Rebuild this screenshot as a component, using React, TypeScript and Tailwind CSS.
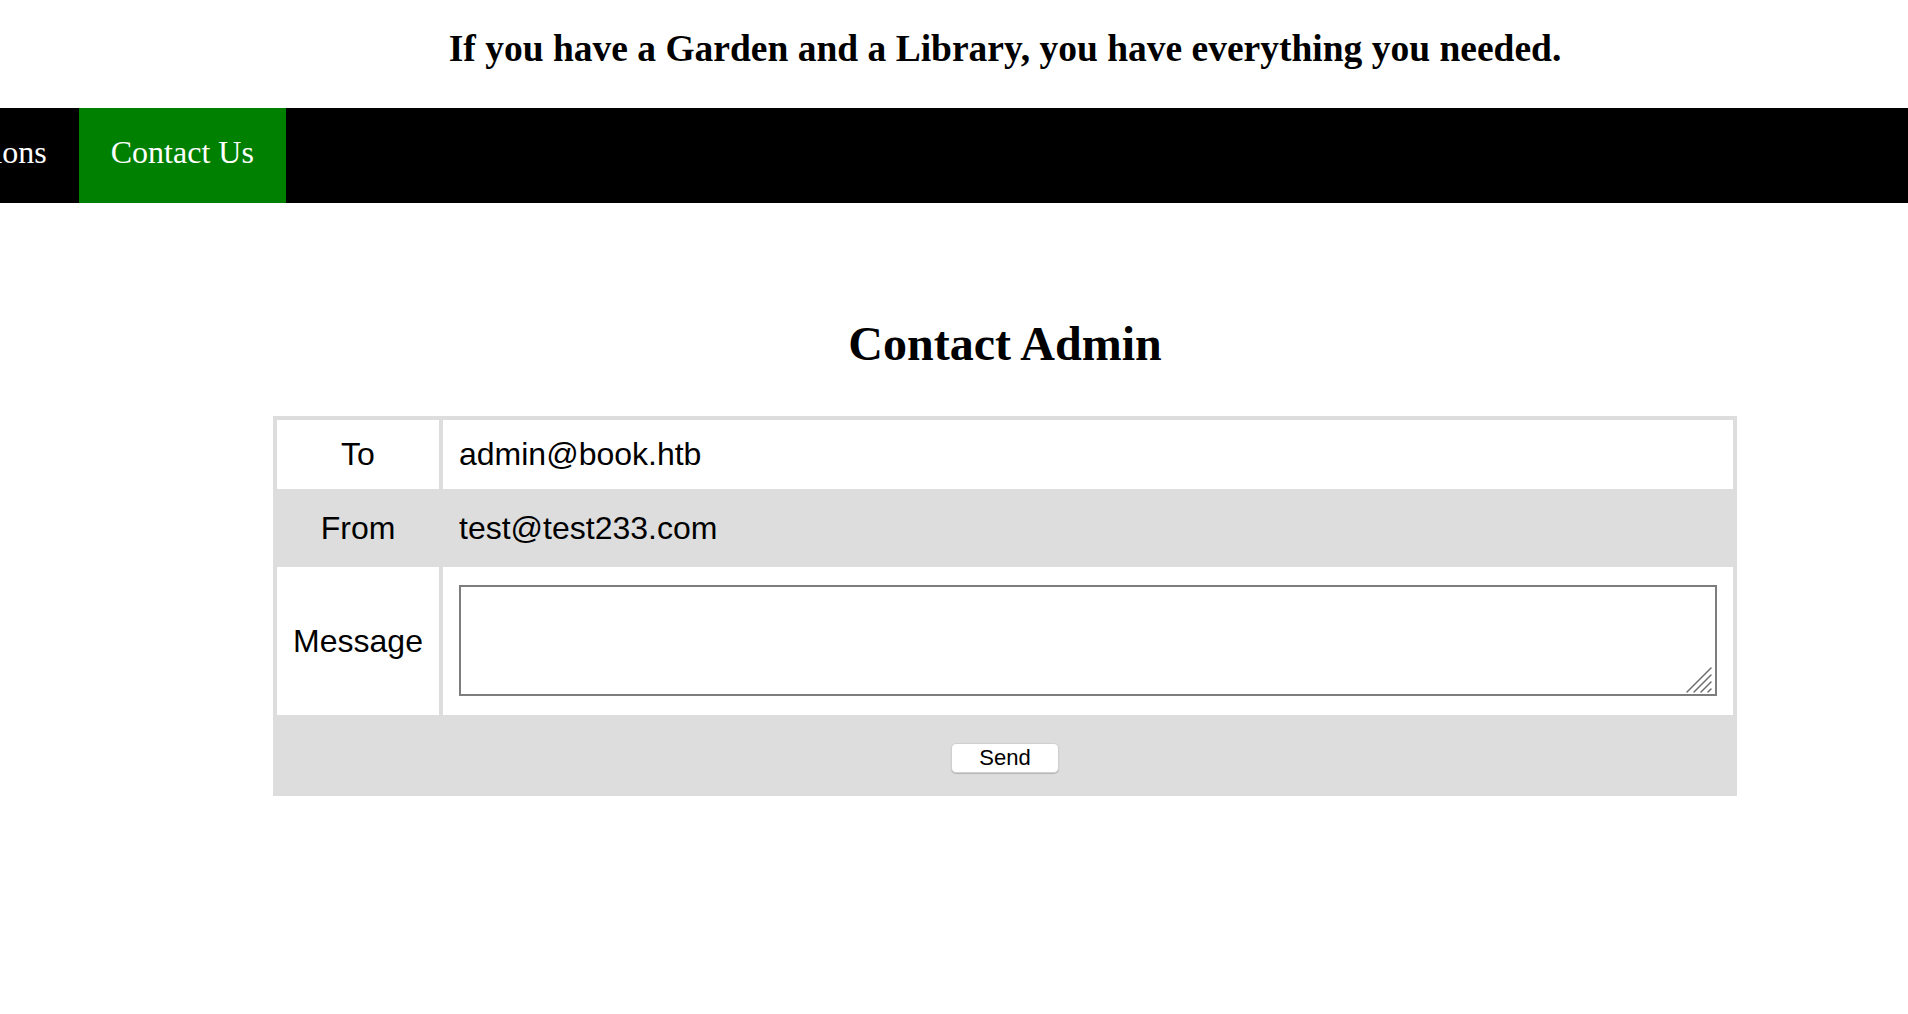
import React from "react";

const serif = "font-['Liberation_Serif','Times_New_Roman',serif]";
const sans = "font-['Liberation_Sans',Arial,sans-serif]";

const ContactPage = () => {
  return (
    <div className={`min-h-screen bg-white text-black ${serif}`}>
      {/* header quote */}
      <header className="h-[108px] pl-[102px] text-center">
        <h2 className="pt-[28px] text-[37.5px] leading-[42px] font-bold">
          If you have a Garden and a Library, you have everything you needed.
        </h2>
      </header>

      {/* nav, first items scrolled out of view */}
      <nav className="h-[95px] bg-black flex overflow-hidden text-white text-[32px] leading-[36px] whitespace-nowrap">
        <a className="-ml-[131px] px-[32px] pt-[26px] shrink-0" href="#">
          Collections
        </a>
        <a className="px-[32px] pt-[26px] bg-[#008000] shrink-0" href="#">
          Contact Us
        </a>
      </nav>

      <main className="pl-[102px]">
        <h1 className="mt-[113px] text-center text-[48px] leading-[55px] font-bold">
          Contact Admin
        </h1>

        <form
          className={`mt-[45px] mx-auto w-[1464px] bg-[#dddddd] p-[4px] grid grid-cols-[162px_1290px] gap-[4px] text-[32px] leading-[37px] ${sans}`}
          onSubmit={(e) => e.preventDefault()}
        >
          <div className="h-[69px] bg-white flex items-center justify-center">To</div>
          <div className="h-[69px] bg-white flex items-center px-[16px]">admin@book.htb</div>

          <div className="h-[70px] flex items-center justify-center">From</div>
          <div className="h-[70px] flex items-center px-[16px]">test@test233.com</div>

          <div className="h-[148px] bg-white flex items-center justify-center">Message</div>
          <div className="h-[148px] bg-white px-[16px] pt-[18px]">
            <div className="relative">
              <textarea className="block w-full h-[111px] bg-white border-2 border-[#7d7d7d] resize-none outline-none" />
              {/* resize grip */}
              <svg
                className="absolute right-[5px] bottom-[3px] pointer-events-none"
                width="26"
                height="26"
                viewBox="0 0 26 26"
              >
                <g stroke="#6b6b6b" strokeWidth="1.4" strokeLinecap="round">
                  <line x1="1" y1="25" x2="25" y2="1" />
                  <line x1="8" y1="25" x2="25" y2="8" />
                  <line x1="15" y1="25" x2="25" y2="15" />
                  <line x1="22" y1="25" x2="25" y2="22" />
                </g>
              </svg>
            </div>
          </div>

          <div className="col-span-2 h-[73px] flex justify-center pt-[24px]">
            <button
              type="submit"
              className="w-[108px] h-[30px] bg-white rounded-[5px] border border-[#cfcfcf] shadow-[0_1px_1px_rgba(0,0,0,0.18)] text-[22px] leading-none"
            >
              Send
            </button>
          </div>
        </form>
      </main>
    </div>
  );
};

export default function App() {
  return <ContactPage />;
}
